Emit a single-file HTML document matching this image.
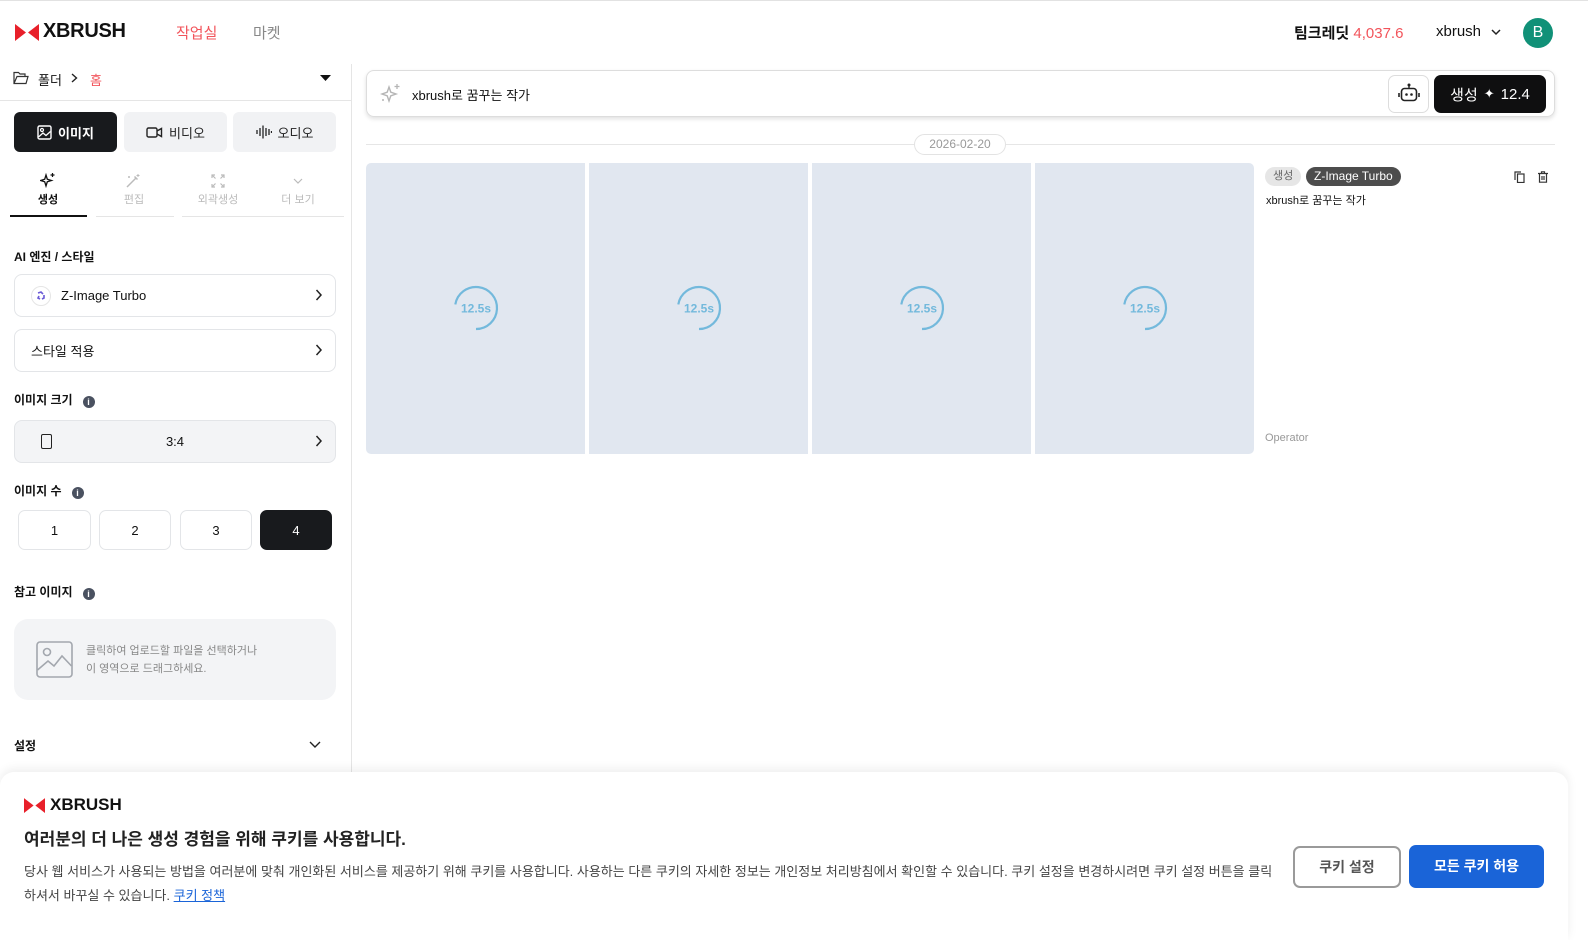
<!DOCTYPE html>
<html><head><meta charset="utf-8"><style>
*{box-sizing:border-box;margin:0;padding:0}
body{width:1588px;height:940px;overflow:hidden;background:#fff;font-family:"Liberation Sans","Noto Sans CJK KR",sans-serif;color:#111;position:relative}
.a{position:absolute}
.btn3{position:absolute;top:112px;width:103px;height:40px;border-radius:6px;background:#f1f2f4;font-size:13px;display:flex;align-items:center;justify-content:center;gap:6px;color:#222}
.tab{position:absolute;top:170px;font-size:11px;color:#bbb;text-align:center;width:78px}
.lbl{position:absolute;left:14px;font-size:12px;font-weight:bold;color:#111}
.info{display:inline-block;width:12px;height:12px;border-radius:50%;background:#4a5160;color:#fff;font-size:9px;text-align:center;line-height:12px;font-weight:bold;margin-left:10px;vertical-align:-1px}
.box{position:absolute;left:14px;width:322px;height:43px;border:1px solid #e3e5e8;border-radius:8px;font-size:13px;display:flex;align-items:center;padding-left:16px}
.chev{position:absolute;right:12px;top:14px}
.num{position:absolute;top:510px;width:73px;height:40px;border:1px solid #e3e5e8;border-radius:7px;font-size:13px;display:flex;align-items:center;justify-content:center}
.img{position:absolute;top:163px;width:219px;height:291px;background:#e1e7f0}
.ring{position:absolute;left:87px;top:122px}
</style></head><body>
<div class="a" style="left:0;top:0;width:1588px;height:1px;background:#e2e2e2"></div>
<svg class="a" style="left:15px;top:24px" width="24" height="17" viewBox="0 0 24 17"><path d="M0 0L11 8.5L0 17Z M24 0L13 8.5L24 17Z" fill="#e8202a"/></svg>
<div class="a" style="left:43px;top:20px;font-size:20px;font-weight:bold;letter-spacing:-0.3px">XBRUSH</div>
<div class="a" style="left:176px;top:22px;font-size:15px;color:#f2545b">작업실</div>
<div class="a" style="left:253px;top:22px;font-size:15px;color:#888">마켓</div>
<div class="a" style="left:1294px;top:22px;font-size:15px;font-weight:bold">팀크레딧 <span style="color:#f2545b;font-weight:normal">4,037.6</span></div>
<div class="a" style="left:1436px;top:23px;font-size:15px">xbrush</div>
<svg class="a" style="left:1491px;top:29px" width="10" height="7"><path d="M1 1L5 5L9 1" stroke="#222" stroke-width="1.5" fill="none"/></svg>
<div class="a" style="left:1523px;top:18px;width:30px;height:30px;border-radius:50%;background:#119178;color:#fff;font-size:16px;text-align:center;line-height:30px">B</div>
<div class="a" style="left:351px;top:64px;width:1px;height:720px;background:#e5e5e5"></div>
<svg class="a" style="left:13px;top:71px" width="16" height="14" viewBox="0 0 16 14"><path d="M1 2.5V12.5H13L15 5.5H4L1 12.5 M1 2.5V1.5H5.5L7 3H12V5.5" stroke="#333" stroke-width="1.2" fill="none"/></svg>
<div class="a" style="left:38px;top:70px;font-size:13px">폴더</div>
<svg class="a" style="left:71px;top:73px" width="7" height="10"><path d="M1 1L5.5 5L1 9" stroke="#222" stroke-width="1.4" fill="none"/></svg>
<div class="a" style="left:90px;top:70px;font-size:13px;color:#f2545b">홈</div>
<svg class="a" style="left:320px;top:75px" width="11" height="7"><path d="M0 0H11L5.5 6Z" fill="#111"/></svg>
<div class="a" style="left:0;top:100px;width:351px;height:1px;background:#e5e5e5"></div>
<div class="btn3" style="left:14px;background:#181a1d;color:#fff"><svg width="15" height="15" viewBox="0 0 15 15"><rect x="1" y="1" width="13" height="13" rx="1.5" stroke="#fff" stroke-width="1.4" fill="none"/><circle cx="5" cy="5" r="1.5" stroke="#fff" stroke-width="1.2" fill="none"/><path d="M1.5 12L6 8L9 10.5L13.5 6.5" stroke="#fff" stroke-width="1.3" fill="none"/></svg><b>이미지</b></div>
<div class="btn3" style="left:124px"><svg width="17" height="13" viewBox="0 0 17 13"><rect x="1" y="2" width="10" height="9" rx="1.5" stroke="#222" stroke-width="1.4" fill="none"/><path d="M11 5L15.5 2.5V10.5L11 8" stroke="#222" stroke-width="1.4" fill="none"/></svg>비디오</div>
<div class="btn3" style="left:233px"><svg width="16" height="14" viewBox="0 0 16 14"><path d="M1 5V9M4 3V11M7 0.5V13.5M10 3V11M13 4V10M15.5 6V8" stroke="#222" stroke-width="1.3"/></svg>오디오</div>
<svg class="a" style="left:40px;top:172px" width="16" height="16" viewBox="0 0 16 16"><path d="M6 3L7.3 7.2L11.5 8.5L7.3 9.8L6 14L4.7 9.8L0.5 8.5L4.7 7.2Z" stroke="#111" stroke-width="1.3" fill="none"/><path d="M12.5 1V5M10.5 3H14.5" stroke="#111" stroke-width="1.2"/></svg>
<div class="tab" style="left:9px;top:191px;color:#111;font-weight:bold">생성</div>
<svg class="a" style="left:125px;top:173px" width="16" height="16" viewBox="0 0 16 16"><path d="M2 14L11 5M9.5 3.5L12.5 6.5" stroke="#bbb" stroke-width="1.5"/><path d="M13 1V4M11.5 2.5H14.5M4 3V5M3 4H5" stroke="#bbb" stroke-width="1"/></svg>
<div class="tab" style="left:95px;top:191px">편집</div>
<svg class="a" style="left:211px;top:174px" width="14" height="14" viewBox="0 0 14 14"><path d="M1 4V1H4M10 1H13V4M13 10V13H10M4 13H1V10M1 1L4.5 4.5M13 1L9.5 4.5M13 13L9.5 9.5M1 13L4.5 9.5" stroke="#bbb" stroke-width="1.2" fill="none"/></svg>
<div class="tab" style="left:179px;top:191px">외곽생성</div>
<svg class="a" style="left:293px;top:178px" width="10" height="6"><path d="M1 1L5 5L9 1" stroke="#bbb" stroke-width="1.2" fill="none"/></svg>
<div class="tab" style="left:259px;top:191px">더 보기</div>
<div class="a" style="left:10px;top:215px;width:77px;height:2px;background:#111"></div>
<div class="a" style="left:96px;top:216px;width:78px;height:1px;background:#e5e5e5"></div>
<div class="a" style="left:182px;top:216px;width:162px;height:1px;background:#e5e5e5"></div>
<div class="lbl" style="top:248px">AI 엔진 / 스타일</div>
<div class="box" style="top:274px;padding-left:16px"><span style="width:20px;height:20px;border-radius:50%;border:1px solid #e5e5e5;display:inline-flex;align-items:center;justify-content:center;margin-right:10px"><svg width="12" height="12" viewBox="0 0 12 12"><path d="M3 3L6 2L8 4M9 5L9 8L7 9M5 9L3 8L4 6" stroke="#6b5bd6" stroke-width="1.6" fill="none"/></svg></span>Z-Image Turbo<svg class="chev" width="8" height="12"><path d="M1.5 1L6 6L1.5 11" stroke="#222" stroke-width="1.5" fill="none"/></svg></div>
<div class="box" style="top:329px">스타일 적용<svg class="chev" width="8" height="12"><path d="M1.5 1L6 6L1.5 11" stroke="#222" stroke-width="1.5" fill="none"/></svg></div>
<div class="lbl" style="top:391px">이미지 크기<span class="info">i</span></div>
<div class="box" style="top:420px;background:#f3f4f6;justify-content:center;padding:0"><span style="position:absolute;left:26px;top:13px;width:11px;height:15px;border:1.3px solid #222;border-radius:2px"></span>3:4<svg class="chev" width="8" height="12"><path d="M1.5 1L6 6L1.5 11" stroke="#222" stroke-width="1.5" fill="none"/></svg></div>
<div class="lbl" style="top:482px">이미지 수<span class="info">i</span></div>
<div class="num" style="left:18px">1</div>
<div class="num" style="left:99px;width:72px">2</div>
<div class="num" style="left:180px;width:72px">3</div>
<div class="num" style="left:260px;width:72px;background:#181a1d;color:#fff;border-color:#181a1d">4</div>
<div class="lbl" style="top:583px">참고 이미지<span class="info">i</span></div>
<div class="a" style="left:14px;top:619px;width:322px;height:81px;border-radius:14px;background:#f3f4f6"></div>
<svg class="a" style="left:36px;top:641px" width="37" height="37" viewBox="0 0 37 37"><rect x="1" y="1" width="35" height="35" rx="3" stroke="#a3a7ae" stroke-width="1.6" fill="none"/><circle cx="11" cy="11" r="3.5" stroke="#a3a7ae" stroke-width="1.6" fill="none"/><path d="M1.5 29L12 20L18 25L26 15L35.5 25" stroke="#a3a7ae" stroke-width="1.6" fill="none"/></svg>
<div class="a" style="left:86px;top:642px;font-size:11px;color:#888;line-height:18px">클릭하여 업로드할 파일을 선택하거나<br>이 영역으로 드래그하세요.</div>
<div class="lbl" style="top:737px">설정</div>
<svg class="a" style="left:309px;top:741px" width="12" height="8"><path d="M1 1L6 6L11 1" stroke="#222" stroke-width="1.4" fill="none"/></svg>
<div class="a" style="left:366px;top:70px;width:1189px;height:47px;border:1px solid #ddd;border-radius:8px;box-shadow:0 2px 4px rgba(0,0,0,0.12)"></div>
<svg class="a" style="left:380px;top:82px" width="22" height="22" viewBox="0 0 22 22"><path d="M9 5L10.8 10.2L16 12L10.8 13.8L9 19L7.2 13.8L2 12L7.2 10.2Z" stroke="#b5b5b5" stroke-width="1.4" fill="none"/><path d="M17 2V7M14.5 4.5H19.5" stroke="#b5b5b5" stroke-width="1.3"/><circle cx="3" cy="18" r="1" fill="#b5b5b5"/></svg>
<div class="a" style="left:412px;top:85px;font-size:13px">xbrush로 꿈꾸는 작가</div>
<div class="a" style="left:1388px;top:75px;width:41px;height:38px;border:1px solid #ddd;border-radius:7px"></div>
<svg class="a" style="left:1398px;top:83px" width="22" height="20" viewBox="0 0 22 20"><circle cx="11" cy="2" r="1.5" fill="#222"/><path d="M11 3V5" stroke="#222" stroke-width="1.4"/><rect x="3.5" y="5.5" width="15" height="12" rx="3" stroke="#222" stroke-width="1.6" fill="none"/><circle cx="8.5" cy="11.5" r="1.3" fill="#222"/><circle cx="13.5" cy="11.5" r="1.3" fill="#222"/><path d="M1 10V14M21 10V14" stroke="#222" stroke-width="1.6"/></svg>
<div class="a" style="left:1434px;top:75px;width:112px;height:38px;border-radius:7px;background:#0f0f10;color:#fff;font-size:15px;display:flex;align-items:center;justify-content:center;gap:6px">생성 <span style="font-size:13px">✦</span> 12.4</div>
<div class="a" style="left:366px;top:144px;width:1189px;height:1px;background:#e6e6e6"></div>
<div class="a" style="left:914px;top:134px;width:92px;height:21px;border:1px solid #e3e3e3;border-radius:11px;background:#fff;font-size:12px;color:#999;text-align:center;line-height:19px">2026-02-20</div>
<div class="img" style="left:366px;border-radius:5px 0 0 5px"><svg class="ring" width="46" height="46" viewBox="0 0 46 46"><path d="M23 44A21 21 0 1 0 2.3 19.4" stroke="#73b9dc" stroke-width="2.2" fill="none"/><text x="23" y="27.5" text-anchor="middle" font-family="Liberation Sans,sans-serif" font-size="12" font-weight="bold" fill="#73b9dc">12.5s</text></svg></div>
<div class="img" style="left:589px"><svg class="ring" width="46" height="46" viewBox="0 0 46 46"><path d="M23 44A21 21 0 1 0 2.3 19.4" stroke="#73b9dc" stroke-width="2.2" fill="none"/><text x="23" y="27.5" text-anchor="middle" font-family="Liberation Sans,sans-serif" font-size="12" font-weight="bold" fill="#73b9dc">12.5s</text></svg></div>
<div class="img" style="left:812px"><svg class="ring" width="46" height="46" viewBox="0 0 46 46"><path d="M23 44A21 21 0 1 0 2.3 19.4" stroke="#73b9dc" stroke-width="2.2" fill="none"/><text x="23" y="27.5" text-anchor="middle" font-family="Liberation Sans,sans-serif" font-size="12" font-weight="bold" fill="#73b9dc">12.5s</text></svg></div>
<div class="img" style="left:1035px;border-radius:0 5px 5px 0"><svg class="ring" width="46" height="46" viewBox="0 0 46 46"><path d="M23 44A21 21 0 1 0 2.3 19.4" stroke="#73b9dc" stroke-width="2.2" fill="none"/><text x="23" y="27.5" text-anchor="middle" font-family="Liberation Sans,sans-serif" font-size="12" font-weight="bold" fill="#73b9dc">12.5s</text></svg></div>
<div class="a" style="left:1265px;top:167px;height:19px;padding:0 8px;border-radius:10px;background:#e6e6e6;color:#666;font-size:11px;line-height:19px">생성</div>
<div class="a" style="left:1306px;top:167px;height:19px;padding:0 8px;border-radius:10px;background:#4d4d4d;color:#fff;font-size:12px;line-height:19px">Z-Image Turbo</div>
<svg class="a" style="left:1514px;top:171px" width="11" height="12" viewBox="0 0 11 12"><rect x="3.5" y="3" width="6.5" height="8.5" stroke="#333" stroke-width="1.2" fill="none"/><path d="M1 9V1H7" stroke="#333" stroke-width="1.2" fill="none"/></svg>
<svg class="a" style="left:1538px;top:171px" width="10" height="12" viewBox="0 0 10 12"><path d="M0 2.5H10M3.5 2.5V0.8H6.5V2.5M1.5 2.5V11.2H8.5V2.5M4 5V9M6 5V9" stroke="#333" stroke-width="1.2" fill="none"/></svg>
<div class="a" style="left:1266px;top:192px;font-size:11px">xbrush로 꿈꾸는 작가</div>
<div class="a" style="left:1265px;top:432px;font-size:11px;color:#999">Operator</div>
<div class="a" style="left:0;top:772px;width:1568px;height:168px;background:#fff;border-radius:14px 14px 0 0;box-shadow:0 -3px 10px rgba(0,0,0,0.07)"></div>
<svg class="a" style="left:24px;top:798px" width="21" height="15" viewBox="0 0 24 17"><path d="M0 0L11 8.5L0 17Z M24 0L13 8.5L24 17Z" fill="#e8202a"/></svg>
<div class="a" style="left:50px;top:795px;font-size:17px;font-weight:bold">XBRUSH</div>
<div class="a" style="left:24px;top:825px;font-size:17px;font-weight:bold;color:#222">여러분의 더 나은 생성 경험을 위해 쿠키를 사용합니다.</div>
<div class="a" style="left:24px;top:860px;width:1250px;font-size:13px;color:#444;line-height:24px">당사 웹 서비스가 사용되는 방법을 여러분에 맞춰 개인화된 서비스를 제공하기 위해 쿠키를 사용합니다. 사용하는 다른 쿠키의 자세한 정보는 개인정보 처리방침에서 확인할 수 있습니다. 쿠키 설정을 변경하시려면 쿠키 설정 버튼을 클릭하셔서 바꾸실 수 있습니다. <span style="color:#1a64d8;text-decoration:underline">쿠키 정책</span></div>
<div class="a" style="left:1293px;top:846px;width:108px;height:42px;border:2px solid #9a9a9a;border-radius:7px;font-size:14px;font-weight:bold;color:#555;text-align:center;line-height:38px">쿠키 설정</div>
<div class="a" style="left:1409px;top:845px;width:135px;height:43px;border-radius:7px;background:#1a64d8;color:#fff;font-size:14px;font-weight:bold;text-align:center;line-height:43px">모든 쿠키 허용</div>
</body></html>
